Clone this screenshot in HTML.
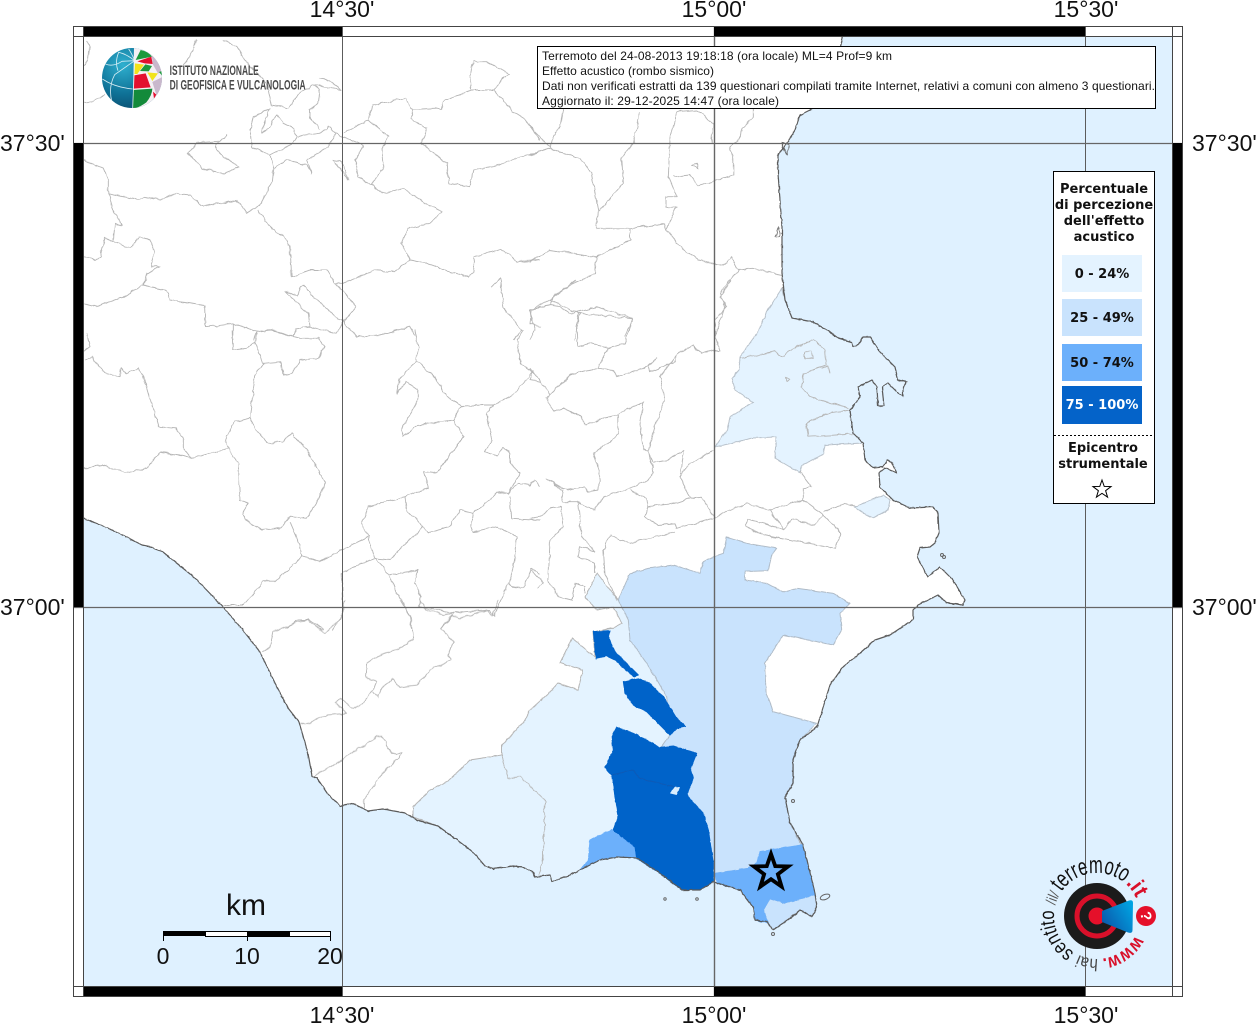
<!DOCTYPE html>
<html lang="it"><head><meta charset="utf-8"><title>Effetto acustico</title>
<style>
html,body{margin:0;padding:0;background:#fff;width:1256px;height:1024px;overflow:hidden}
svg{display:block}
.b{fill:none;stroke:#b6b6b6;stroke-width:2.8;stroke-linejoin:round}
.l{font-family:"Liberation Sans",sans-serif;font-size:23px;fill:#111}
.t{font-family:"Liberation Sans",sans-serif;font-size:12px;fill:#111}
.g{font-family:"DejaVu Sans",sans-serif;font-weight:bold;font-size:13px;fill:#111;text-anchor:middle}
.h{font-family:"Liberation Sans",sans-serif;fill:#111}
</style></head><body>
<svg width="1256" height="1024" viewBox="0 0 1256 1024" xmlns="http://www.w3.org/2000/svg">
<defs>
<radialGradient id="gl" cx=".35" cy=".28" r=".8"><stop offset="0" stop-color="#2fb0cf"/><stop offset=".6" stop-color="#0f7297"/><stop offset="1" stop-color="#0a4d6e"/></radialGradient>
<linearGradient id="cone" x1="0" x2="1" y1=".8" y2=".2"><stop offset="0" stop-color="#0b55a8"/><stop offset="1" stop-color="#00a3e2"/></linearGradient>
<clipPath id="gc"><circle cx="102" cy="102" r="90"/></clipPath>
<path id="arc" d="M1135.3,935.5 A43,43 0 1 1 1136,897.8" fill="none"/>
<filter id="rough" filterUnits="userSpaceOnUse" x="0" y="0" width="1256" height="1024"><feTurbulence type="fractalNoise" baseFrequency=".13" numOctaves="2" seed="4"/><feDisplacementMap in="SourceGraphic" scale="4" xChannelSelector="R" yChannelSelector="G"/></filter>
<filter id="rough2" filterUnits="userSpaceOnUse" x="0" y="0" width="1256" height="1024"><feTurbulence type="fractalNoise" baseFrequency=".2" numOctaves="2" seed="9"/><feDisplacementMap in="SourceGraphic" scale="2" xChannelSelector="R" yChannelSelector="G"/></filter>
</defs>
<rect x="83" y="36" width="1090" height="951" fill="#dff1ff"/>
<!-- land -->
<path fill="#fff" d="M83,36 L843,36 835,70 825,100 812,109 800,115 795,130 787,143 778,155 778,173 782,227 782,273 785,300 792,318 813,322 827,330 838,338 852,342 853,347 858,345 863,337 870,337 880,352 895,367 898,380 907,382 903,387 903,396 898,393 888,383 882,387 884,406 878,406 877,387 872,380 858,387 860,397 850,410 853,433 863,443 865,460 873,468 883,467 887,460 892,462 897,473 885,468 879,473 880,487 893,500 910,508 933,507 938,513 939,533 935,543 930,547 920,548 917,557 928,577 940,567 953,580 965,600 963,605 947,603 938,595 918,605 913,610 913,620 905,625 890,635 875,640 860,653 843,667 830,685 817,727 800,740 793,760 793,783 785,797 790,823 802,843 807,860 815,893 817,907 812,917 800,910 792,917 773,930 767,922 755,920 753,907 740,890 717,883 713,882 700,890 682,890 660,873 637,858 617,857 600,860 580,870 570,875 552,882 550,875 535,877 533,872 523,867 513,866 493,869 485,866 473,852 453,837 438,826 417,820 405,813 383,809 368,811 352,803 340,806 327,793 317,778 312,776 308,753 299,722 288,708 275,683 260,652 242,629 223,607 195,578 163,552 155,549 152,547 142,545 117,532 83,518 Z"/>
<!-- tints -->
<g filter="url(#rough2)">
<path fill="#e4f3ff" stroke="#b9c2cb" d="M782,288 768,310 757,333 740,357 739,370 732,378 735,390 753,402 730,417 727,430 715,447 737,442 752,438 776,437 775,458 800,473 802,465 823,455 825,445 863,443 853,433 850,410 860,397 858,387 872,380 877,387 878,406 884,406 882,387 888,383 898,393 903,396 903,387 907,382 898,380 895,367 880,352 870,337 863,337 858,345 853,347 852,342 838,338 827,330 813,322 792,318 785,300 Z"/>
<path fill="#e4f3ff" stroke="#b9c2cb" d="M855,507 883,495 890,500 888,510 873,518 863,513 Z"/>
<path fill="#e4f3ff" stroke="#b6b6b6" d="M597,573 585,597 597,610 613,607 622,623 613,628 593,632 595,657 572,638 560,663 583,670 578,690 558,683 550,692 530,710 525,720 513,733 502,745 502,755 470,760 447,782 430,790 413,807 413,817 438,826 453,837 473,852 485,866 493,869 513,866 523,867 533,872 535,877 550,875 552,882 570,875 580,870 700,800 690,700 640,620 618,600 Z"/>
<g transform="translate(500,530) scale(.33333)" stroke-width="3" stroke-linejoin="round">
<path fill="#c9e3fd" stroke="#b0bcc8" d="M355,210 L390,130 445,115 520,105 600,130 610,95 640,80 670,70 680,22 740,40 830,55 815,75 805,122 735,125 735,150 800,160 850,187 893,175 1000,190 1050,220 1020,250 1025,300 1000,345 850,315 795,400 800,490 820,545 950,580 900,630 880,690 880,760 855,800 870,880 905,945 800,965 770,1000 745,1015 680,1025 645,1030 640,1060 640,1000 560,900 480,800 450,680 485,650 510,615 500,500 465,440 440,400 390,330 385,270 Z"/>
<path fill="#6cb0fb" stroke="#6cb0fb" d="M335,900 L270,930 265,990 240,1020 300,990 350,980 410,985 405,950 Z"/>
<path fill="#c9e3fd" stroke="#b0bcc8" d="M810,1105 855,1120 905,1105 945,1095 950,1130 935,1160 900,1140 875,1160 820,1200 805,1180 790,1140 Z"/>
<path fill="#6cb0fb" stroke="#6cb0fb" d="M645,1030 680,1025 745,1015 770,1000 780,965 905,945 920,990 945,1095 905,1105 855,1120 810,1105 790,1140 805,1180 765,1170 760,1130 720,1080 650,1060 Z"/>
<path fill="#0463c9" stroke="#0463c9" d="M280,305 330,302 325,320 345,365 415,435 400,440 345,390 320,378 288,385 Z"/>
<path fill="#0463c9" stroke="#0463c9" d="M415,445 370,455 375,490 400,525 440,545 470,575 510,615 530,595 558,590 530,565 490,500 450,460 Z"/>
<path fill="#0463c9" stroke="#0463c9" d="M350,592 335,620 340,660 315,713 335,735 345,800 355,855 340,900 405,950 410,985 480,1030 545,1080 600,1080 640,1055 640,1000 625,900 610,850 560,795 580,745 570,720 590,670 520,648 480,652 400,610 Z"/>
<path fill="#dbeefe" d="M510,790 525,770 540,772 530,795 Z"/>
<path fill="none" stroke="#0a5ab6" d="M335,735 400,720 420,745 500,765 520,770"/>
</g>
</g>
<!-- borders -->
<g filter="url(#rough)">
<g transform="translate(80,40) scale(.33333)">
<path class="b" d="M10,190 40,185 75,160"/>
<path class="b" d="M10,75 25,60 30,25 20,0"/>
<path class="b" d="M350,0 330,45 310,75"/>
<path class="b" d="M430,0 470,20 495,60 560,130 575,195 625,205 660,160 700,135"/>
<path class="b" d="M720,115 745,120 785,150 700,135 720,150 715,190 690,210 690,230 720,270"/>
<path class="b" d="M575,205 520,230 510,270 515,320 570,345"/>
<path class="b" d="M570,205 548,260 545,275 565,265 590,225 610,250 640,265 650,290"/>
<path class="b" d="M765,280 745,260 720,280 650,290 640,310 570,345 580,385 575,430 540,495 500,520 470,480 370,500 330,465 290,460 240,480 190,470 175,480 85,460 85,420 70,385 10,360"/>
<path class="b" d="M85,460 100,510 125,555 105,550 100,605 75,595 60,650 45,660 15,650"/>
<path class="b" d="M100,605 150,625 180,590 210,600 225,635 210,680 240,680 200,700 190,735 130,770 50,800 10,790"/>
<path class="b" d="M190,735 260,750 270,780 375,795 378,860 460,850 530,875 520,900"/>
<path class="b" d="M460,850 460,900"/>
<path class="b" d="M530,875 570,870 640,890 650,865 690,860 770,880 790,845 780,840 700,770 670,735 650,765 615,755 685,820 690,860"/>
<path class="b" d="M535,510 575,570 610,585 630,620 635,710 690,690 740,690 765,730 790,730 850,705 880,690 945,695 990,660 1040,670 1110,695 1165,710 1180,700 1185,650 1265,625 1310,665 1380,660"/>
<path class="b" d="M765,730 790,755 830,800 790,845 830,890 900,885 990,860 1005,885"/>
<path class="b" d="M990,660 965,610 985,565 1050,550 1085,515 1040,490 970,445 905,460 875,435"/>
<path class="b" d="M875,435 910,385 905,330 925,290 865,240 790,280"/>
<path class="b" d="M865,240 875,195 975,175 1000,210 1085,205 1095,180 1175,150 1170,115 1180,65 1220,65 1285,100 1240,150 1170,150"/>
<path class="b" d="M1000,210 990,235 1040,265 1025,310 1100,370 1105,430 1170,440 1180,390 1240,380 1320,350 1380,335"/>
<path class="b" d="M1240,150 1300,215 1340,240 1380,300"/>
<path class="b" d="M765,280 850,315 825,360 835,410 875,435"/>
<path class="b" d="M580,385 620,360 680,375 695,400 680,360 745,320 765,280"/>
<path class="b" d="M760,360 785,365 805,420 Z"/>
<path class="b" d="M325,340 350,310 420,305 440,285 405,320 430,350 480,380 430,400 365,385 Z"/>
<path class="b" d="M1235,740 1260,715 1270,800 1325,870 1300,900"/>
<path class="b" d="M1380,800 1355,810 1350,850 1380,860"/>
</g>
<g transform="translate(80,330) scale(.33333)">
<path class="b" d="M10,65 30,50 20,10"/>
<path class="b" d="M15,90 35,80 75,130 120,140 125,115 140,130 175,115 190,135 235,290 285,295 310,320 310,355 335,385 445,355 435,330 465,275 510,262 525,295 565,340 605,335 635,310 680,360 735,460 715,510 680,565 630,560 600,595 545,600 495,570 490,545 505,520 480,510 475,400 445,355"/>
<path class="b" d="M510,262 525,140 548,100 605,95 610,135 635,130 660,90 715,85 735,50 715,25 660,25 575,0"/>
<path class="b" d="M548,100 525,35 530,10"/>
<path class="b" d="M525,35 500,55 460,60 458,0"/>
<path class="b" d="M10,415 65,405 135,428 200,415 240,367 300,375 335,385"/>
<path class="b" d="M630,575 660,645 665,680 585,755 550,755 490,825 430,825"/>
<path class="b" d="M665,680 720,695 785,660 865,620 845,580 865,530 975,500 1045,475 1030,425 1070,430 1150,320 1120,270 1010,285 970,320 965,300 1015,210 1015,180 980,155 950,190 960,145 1010,95 1060,135 1100,200 1145,228 1120,270"/>
<path class="b" d="M1010,95 1015,50 1005,0"/>
<path class="b" d="M1145,228 1210,225 1240,225 1220,250 1235,330 1215,365 1250,378 1270,352 1290,370 1290,400 1320,430 1285,490 1250,485 1240,500 1180,550 1175,590 1180,605 1250,590 1310,620 1305,690 1285,760 1240,860 1230,840 1120,850 1015,830 1025,800 1005,760 1015,720 925,735 910,710 885,685 865,620"/>
<path class="b" d="M1240,225 1300,195 1360,125 1325,105 1310,30 1330,0"/>
<path class="b" d="M1360,125 1350,150 1380,155"/>
<path class="b" d="M975,500 980,540 1030,590 1045,610 1105,590 1140,540 1180,550"/>
<path class="b" d="M1030,590 970,650 930,690 885,685 820,710 785,730 790,830 785,850 760,900"/>
<path class="b" d="M925,735 995,870 995,900"/>
<path class="b" d="M1285,490 1315,460 1350,465 1365,450 1380,470"/>
<path class="b" d="M1290,495 1295,565 1380,570"/>
<path class="b" d="M1285,760 1295,770 1330,775 1355,715 1380,730"/>
<path class="b" d="M615,895 655,870 690,870 730,900"/>
<path class="b" d="M1120,850 1085,895"/>
</g>
<g transform="translate(530,40) scale(.33333)">
<path class="b" d="M100,205 90,260 65,300 60,325 0,345"/>
<path class="b" d="M0,260 25,285 50,310 70,330 150,355 185,405 205,515 200,565 300,565 405,550 410,570 440,500 405,505 405,470 440,470 415,410 420,300 440,215 500,210 550,250 545,310"/>
<path class="b" d="M205,515 280,430 275,350 310,310 330,215"/>
<path class="b" d="M610,355 600,320 625,305 635,265 670,230 670,205"/>
<path class="b" d="M430,410 480,405 505,437 550,425 610,405 610,355"/>
<path class="b" d="M410,570 450,620 505,660 580,675 605,650 625,690 670,685 755,705"/>
<path class="b" d="M625,690 570,760 585,800 555,890"/>
<path class="b" d="M300,565 300,600 200,650 195,700 120,735 60,780 145,820 310,835 285,890"/>
<path class="b" d="M200,650 60,630 0,665"/>
<path class="b" d="M145,820 135,900"/>
<path class="b" d="M60,780 0,810 15,870 0,900"/>
<path class="b" d="M485,375 500,370 505,385 Z"/>
<path class="b" d="M745,560 750,590 735,590 Z" style="stroke:#777"/>
<path class="b" d="M755,310 775,315 770,345 Z" style="stroke:#666"/>
</g>
<g transform="translate(530,280) scale(.33333)">
<path class="b" d="M60,75 90,80 120,100 200,80 310,115 285,190 235,205 185,190 145,200 140,135 150,100"/>
<path class="b" d="M60,75 70,50 140,0"/>
<path class="b" d="M60,75 0,90 5,125"/>
<path class="b" d="M235,205 205,265 120,285 60,345 50,355 70,395 100,385 155,410 165,435 260,405 340,365 330,435 340,510 355,515 380,420 405,360 390,290 440,225 435,245 360,275 355,258 380,235 355,260 260,290 250,270 205,265"/>
<path class="b" d="M0,265 45,320 60,345"/>
<path class="b" d="M440,225 490,195 515,220 550,210 570,210 555,170 555,120 590,80 570,50 605,0"/>
<path class="b" d="M265,405 265,465 190,520 210,580 205,630 175,635 165,620 110,630 50,595 100,630 95,665 140,665 195,690 220,650 285,630 355,600 370,575 355,515"/>
<path class="b" d="M355,515 370,548 415,540 460,510 450,590 480,655 435,670 355,680 345,710 385,735 435,730 440,745 550,715 600,690 650,670 715,690 820,660 880,705 935,760 915,805 800,785 700,765 645,740 655,715 760,750 720,690"/>
<path class="b" d="M880,705 855,735 785,718 760,750"/>
<path class="b" d="M550,510 470,560 450,590"/>
<path class="b" d="M555,715 515,650 480,655"/>
<path class="b" d="M300,630 350,655 355,680"/>
<path class="b" d="M435,755 300,790 240,765 220,810 225,880 260,960"/>
<path class="b" d="M145,670 155,770 195,815 150,800 145,830 195,850 195,880"/>
<path class="b" d="M60,685 95,680 100,740 60,780 55,900 85,950 125,960 135,910 165,920 165,940"/>
<path class="b" d="M0,715 30,710 70,680"/>
<path class="b" d="M0,865 40,910 25,925"/>
<path class="b" d="M630,235 735,215 760,230 790,205 850,180 885,210 890,255 820,280 815,320 840,350 920,375 960,385"/>
<path class="b" d="M875,265 895,258 900,280"/>
<path class="b" d="M825,215 845,215 850,235 825,235 Z"/>
<path class="b" d="M765,292 778,297 770,305 Z"/>
<path class="b" d="M960,390 890,400 830,430 835,470 970,462"/>
<path class="b" d="M820,660 820,625 845,620 810,575"/>
<path class="b" d="M880,695 950,670 975,680"/>
</g>
<g transform="translate(240,600) scale(.33333)">
<path class="b" d="M65,155 90,140 100,95 175,65 205,60 255,100 300,55 315,0"/>
<path class="b" d="M180,370 195,373 260,345 320,340 285,310 300,295 340,325 370,310 400,270 410,243 375,230 380,190 415,165 470,150 520,120 510,50 480,0"/>
<path class="b" d="M400,275 415,292 425,265 455,235 480,262 530,255 570,210 635,180 625,165 640,125 605,85 635,45 660,55 745,30 755,50 775,0"/>
<path class="b" d="M540,0 560,30 610,45 635,40"/>
<path class="b" d="M225,527 305,480 410,410 425,408 455,460 488,460 430,515 370,600 370,625"/>
<path class="b" d="M785,465 805,535 840,530 915,600 910,780 895,825"/>
</g>
</g>
<!-- coast -->
<path filter="url(#rough2)" fill="none" stroke="#5a5a5a" stroke-width="1.2" stroke-linejoin="round" d="M843,36 835,70 825,100 812,109 800,115 795,130 787,143 778,155 778,173 782,227 782,273 785,300 792,318 813,322 827,330 838,338 852,342 853,347 858,345 863,337 870,337 880,352 895,367 898,380 907,382 903,387 903,396 898,393 888,383 882,387 884,406 878,406 877,387 872,380 858,387 860,397 850,410 853,433 863,443 865,460 873,468 883,467 887,460 892,462 897,473 885,468 879,473 880,487 893,500 910,508 933,507 938,513 939,533 935,543 930,547 920,548 917,557 928,577 940,567 953,580 965,600 963,605 947,603 938,595 918,605 913,610 913,620 905,625 890,635 875,640 860,653 843,667 830,685 817,727 800,740 793,760 793,783 785,797 790,823 802,843 807,860 815,893 817,907 812,917 800,910 792,917 773,930 767,922 755,920 753,907 740,890 717,883 713,882 700,890 682,890 660,873 637,858 617,857 600,860 580,870 570,875 552,882 550,875 535,877 533,872 523,867 513,866 493,869 485,866 473,852 453,837 438,826 417,820 405,813 383,809 368,811 352,803 340,806 327,793 317,778 312,776 308,753 299,722 288,708 275,683 260,652 242,629 223,607 195,578 163,552 155,549 152,547 142,545 117,532 83,518"/>
<g fill="none" stroke="#666" stroke-width="1">
<ellipse cx="825" cy="897" rx="5" ry="2.5" transform="rotate(-20 825 897)"/>
<circle cx="793" cy="801" r="1.5"/><circle cx="697" cy="899" r="1.3"/><circle cx="665" cy="899" r="1.2"/><circle cx="773" cy="934" r="1.5"/>
<circle cx="942" cy="555" r="1.5"/><circle cx="944" cy="557" r="1.5"/>
</g>
<!-- grid -->
<g stroke="#5c5c5c" fill="none">
<path d="M342.5,26V997M1085.5,26V997"/>
<path d="M714.5,26V997" stroke-width="1.4" stroke="#666"/>
<path d="M73,143.5H1183M73,607.5H1183" stroke-width="1.2" stroke="#666"/>
</g>
<!-- frame -->
<rect x="83" y="26" width="259" height="10" fill="#000"/><rect x="714" y="26" width="371" height="10" fill="#000"/>
<rect x="83" y="987" width="259" height="10" fill="#000"/><rect x="714" y="987" width="371" height="10" fill="#000"/>
<rect x="73" y="143" width="10" height="464" fill="#000"/><rect x="1173" y="143" width="10" height="464" fill="#000"/>
<g fill="none" stroke="#444">
<rect x="73.5" y="26.5" width="1109" height="970"/>
<rect x="83.5" y="36.5" width="1089" height="950"/>
<path d="M73,36.5H1183M73,986.5H1183M83.5,26V997M1172.5,26V997"/>
</g>
<!-- coords -->
<g class="l" text-anchor="middle">
<text x="342" y="17">14°30'</text><text x="714" y="17">15°00'</text><text x="1086" y="17">15°30'</text>
<text x="342" y="1023">14°30'</text><text x="714" y="1023">15°00'</text><text x="1086" y="1023">15°30'</text>
</g>
<g class="l">
<text x="0" y="151">37°30'</text><text x="0" y="615">37°00'</text>
<text x="1192" y="151">37°30'</text><text x="1192" y="615">37°00'</text>
</g>
<!-- text box -->
<rect x="537.5" y="46.5" width="618" height="62" fill="#fff" stroke="#000"/>
<g class="t">
<text x="542" y="60" textLength="350" lengthAdjust="spacing">Terremoto del 24-08-2013 19:18:18 (ora locale) ML=4 Prof=9 km</text>
<text x="542" y="75" textLength="172" lengthAdjust="spacing">Effetto acustico (rombo sismico)</text>
<text x="542" y="90" textLength="613" lengthAdjust="spacing">Dati non verificati estratti da 139 questionari compilati tramite Internet, relativi a comuni con almeno 3 questionari.</text>
<text x="542" y="105" textLength="237" lengthAdjust="spacing">Aggiornato il: 29-12-2025 14:47 (ora locale)</text>
</g>
<!-- legend -->
<rect x="1053.5" y="171.5" width="101" height="332" fill="#fff" stroke="#000"/>
<text class="g" x="1104" y="193">Percentuale</text>
<text class="g" x="1104" y="209">di percezione</text>
<text class="g" x="1104" y="225">dell'effetto</text>
<text class="g" x="1104" y="241">acustico</text>
<rect x="1062" y="255" width="80" height="37" fill="#e4f3ff"/>
<rect x="1062" y="299" width="80" height="37" fill="#c9e3fd"/>
<rect x="1062" y="344" width="80" height="37" fill="#6cb0fb"/>
<rect x="1062" y="386" width="80" height="38" fill="#0463c9"/>
<text class="g" x="1102" y="278">0 - 24%</text>
<text class="g" x="1102" y="322">25 - 49%</text>
<text class="g" x="1102" y="367">50 - 74%</text>
<text class="g" x="1102" y="409" style="fill:#fff">75 - 100%</text>
<path d="M1054,435.5H1154" stroke="#000" stroke-dasharray="2 2" fill="none"/>
<text class="g" x="1103" y="452">Epicentro</text>
<text class="g" x="1103" y="468">strumentale</text>
<path transform="translate(1102,489.5)" fill="#fff" stroke="#000" d="M0,-9.5 2.23,-3.07 9.03,-2.94 3.61,1.17 5.58,7.69 0,3.8 -5.58,7.69 -3.61,1.17 -9.03,-2.94 -2.23,-3.07 Z"/>
<!-- epicentre star -->
<path transform="translate(771,872) scale(1.9)" fill="none" stroke="#000" stroke-width="2" stroke-miterlimit="10" d="M0,-9.5 2.23,-3.07 9.03,-2.94 3.61,1.17 5.58,7.69 0,3.8 -5.58,7.69 -3.61,1.17 -9.03,-2.94 -2.23,-3.07 Z"/>
<!-- INGV logo -->
<g transform="translate(98,44) scale(.33333)">
<circle cx="102" cy="102" r="90" fill="url(#gl)"/>
<g clip-path="url(#gc)">
<path fill="#f4f0f4" d="M108,12 H195 V195 H104 Z"/>
<path fill="#c9b8cc" d="M160,28 Q190,55 195,85 L180,88 L165,62 Z"/>
<path fill="#c9b8cc" d="M163,114 L195,98 Q195,130 176,155 Z"/>
<path fill="#1c9a3c" d="M113,48 L128,18 Q150,22 162,38 Z"/>
<path fill="#e3102f" d="M118,52 L160,38 164,60 140,58 Z"/>
<path fill="#f1e31a" d="M110,58 L138,62 118,90 109,90 Z"/>
<path fill="#1c9a3c" d="M142,61 L162,66 152,82 126,81 Z"/>
<path fill="#1c9a3c" d="M183,84 L195,80 195,98 Z"/>
<path fill="#f1e31a" d="M148,85 L180,88 163,111 Z"/>
<path fill="#e3102f" d="M108,94 L143,88 158,130 107,134 Z"/>
<path fill="#138a3a" d="M105,138 L163,134 Q162,155 145,175 Q125,190 104,195 Z"/>
<path fill="#e3102f" d="M165,143 L175,152 168,164 Z"/>
<g fill="none" stroke="#e8f6fa" stroke-width="2.5" opacity=".9">
<path d="M104,192 L110,50"/>
<path d="M110,50 L50,92 Q30,130 42,175"/>
<path d="M110,50 Q85,30 62,25 Q50,55 60,80"/>
<path d="M22,60 Q45,70 72,52 L110,50"/>
<path d="M92,15 Q102,30 110,50"/>
<path d="M13,105 Q50,130 104,135"/>
</g>
</g>
</g>
<g transform="translate(70,20) scale(.33333)">
<text x="299" y="165" font-family="'Liberation Sans',sans-serif" font-weight="bold" font-size="42" fill="#4a4a4a" textLength="267" lengthAdjust="spacingAndGlyphs">ISTITUTO NAZIONALE</text>
<text x="299" y="208" font-family="'Liberation Sans',sans-serif" font-weight="bold" font-size="42" fill="#4a4a4a" textLength="408" lengthAdjust="spacingAndGlyphs">DI GEOFISICA E VULCANOLOGIA</text>
</g>
<!-- scale bar -->
<rect x="163" y="931" width="42" height="5" fill="#000"/><rect x="247" y="931" width="42" height="5" fill="#000"/>
<rect x="205" y="931" width="42" height="5" fill="#fff"/><rect x="289" y="931" width="41" height="5" fill="#fff"/>
<path d="M163.5,931V941M205.5,931V937M247.5,931V941M289.5,931V937M330.5,931V941M163,931.5H330M205,936.5H330" stroke="#000" fill="none"/>
<text x="246" y="915" font-family="'Liberation Sans',sans-serif" font-size="30" fill="#111" text-anchor="middle">km</text>
<g class="l" text-anchor="middle"><text x="163" y="964">0</text><text x="247" y="964">10</text><text x="330" y="964">20</text></g>
<!-- haisentito logo -->
<circle cx="1097" cy="916" r="33" fill="#1b1b1b"/>
<circle cx="1097" cy="916" r="20" fill="none" stroke="#d9102a" stroke-width="5"/>
<circle cx="1097" cy="916" r="8.5" fill="#e5102a"/>
<path d="M1102,911 L1129,900.5 Q1133,899.5 1133,903 L1132.5,930 Q1132.5,934 1128,932.5 L1102,922 Z" fill="url(#cone)"/>
<circle cx="1146" cy="916" r="10" fill="#e5102a"/>
<text x="1146" y="916" transform="rotate(80 1146 916)" dy="5" text-anchor="middle" font-family="'Liberation Sans',sans-serif" font-weight="bold" font-size="15" fill="#fff">?</text>
<text class="h" font-size="19" font-weight="bold" style="fill:#d9102a"><textPath href="#arc" startOffset="0" textLength="42" lengthAdjust="spacingAndGlyphs">www.</textPath></text>
<text class="h" font-size="17" style="fill:#444"><textPath href="#arc" startOffset="46" textLength="20" lengthAdjust="spacingAndGlyphs">hai</textPath></text>
<text class="h" font-size="21"><textPath href="#arc" startOffset="71" textLength="49" lengthAdjust="spacingAndGlyphs">sentito</textPath></text>
<text class="h" font-size="15" style="fill:#555"><textPath href="#arc" startOffset="125" textLength="12" lengthAdjust="spacingAndGlyphs">/il/</textPath></text>
<text class="h" font-size="24"><textPath href="#arc" startOffset="140" textLength="71" lengthAdjust="spacingAndGlyphs">terremoto</textPath></text>
<text class="h" font-size="22" font-weight="bold" style="fill:#d9102a"><textPath href="#arc" startOffset="213" textLength="18" lengthAdjust="spacingAndGlyphs">.it</textPath></text>
</svg>
</body></html>
